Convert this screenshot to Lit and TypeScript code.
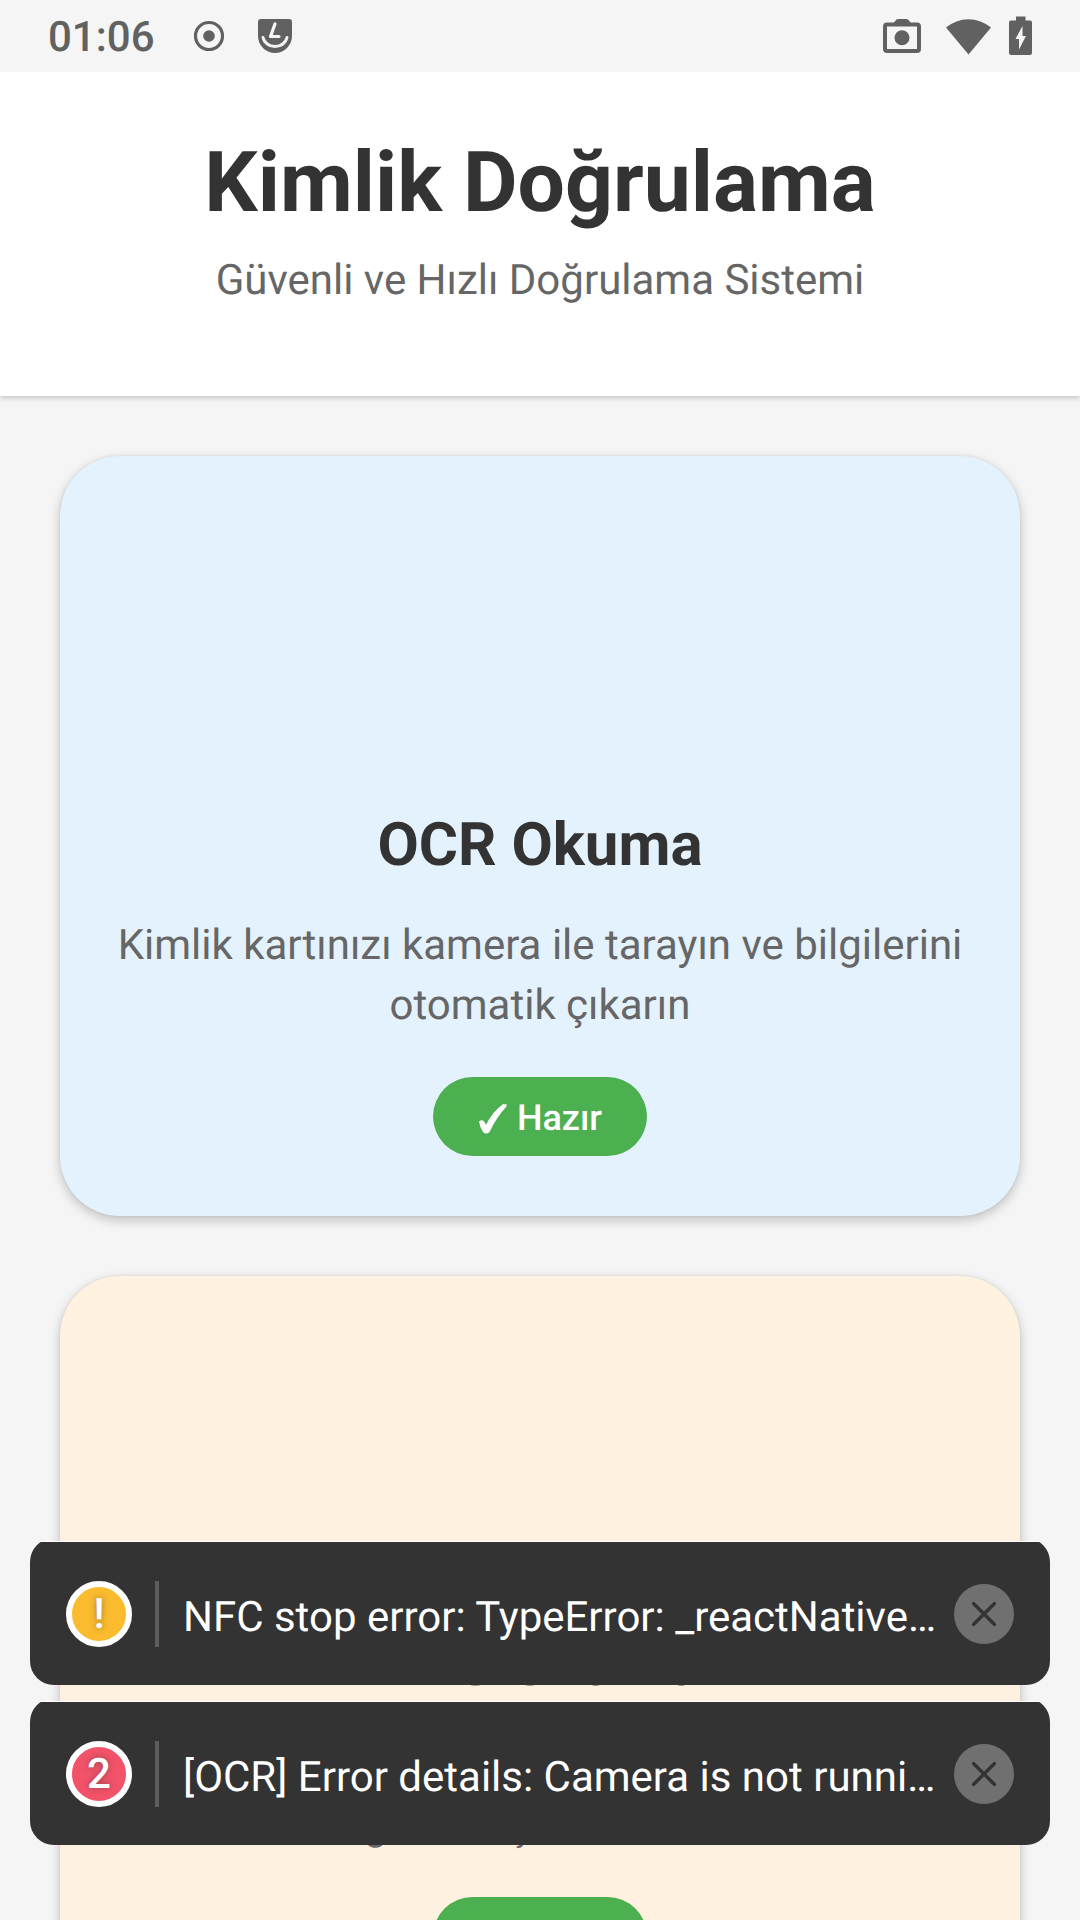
import { LitElement, html, css, svg } from "lit";
import { customElement, property } from "lit/decorators.js";

@customElement("status-bar")
class StatusBar extends LitElement {
  static styles = css`
    :host {
      display: flex;
      justify-content: space-between;
      align-items: center;
      flex: none;
      height: 72px;
      padding: 0 48px;
      background: #f5f5f5;
      color: #616161;
    }
    .left, .right { display: flex; align-items: center; }
    .left { gap: 38px; }
    .right { gap: 18px; }
    .notices { display: flex; align-items: center; gap: 33px; }
    .clock { padding-top: 4px; font-size: 42px; line-height: 48px; font-weight: 500; }
    .camera { margin-right: 7px; }
    svg { display: block; }
  `;
  render() {
    return html`
      <div class="left">
        <time class="clock">01:06</time>
        <div class="notices">
          <svg width="32" height="32" viewBox="0 0 32 32">
            <circle cx="16" cy="16" r="13.5" fill="none" stroke="currentColor" stroke-width="3.2" />
            <circle cx="16" cy="16" r="5.8" fill="currentColor" />
          </svg>
          <svg width="34" height="34" viewBox="0 0 34 34">
            <path d="M3 0h28q3 0 3 3v14a17 17 0 0 1-34 0V3q0-3 3-3z" fill="currentColor" />
            <path d="M17 5l-4.500 12.500h8.500" fill="none" stroke="#f5f5f5" stroke-width="3.200" stroke-linecap="round" stroke-linejoin="round" />
            <path d="M5 18.500a12.200 11 0 0 0 24 0" fill="none" stroke="#f5f5f5" stroke-width="3" stroke-linecap="round" />
          </svg>
        </div>
      </div>
      <div class="right">
        <svg class="camera" width="38" height="34" viewBox="0 0 38 34">
          <path d="M10.500 4l3-3.500q.8-.5 2-.5h7.500q1.200 0 2 .5L28 4v2H10.500z" fill="currentColor" />
          <rect x="2" y="5.500" width="34" height="26.500" rx="2" fill="none" stroke="currentColor" stroke-width="4" />
          <circle cx="19" cy="18.700" r="7.500" fill="currentColor" />
        </svg>
        <svg width="45" height="38" viewBox="0 0 45 38">
          <path d="M22.500 37.500L0 10.500a35 35 0 0 1 45 0z" fill="currentColor" />
        </svg>
        <svg width="23" height="40" viewBox="0 0 23 40">
          <path d="M7 .5h9.500v4H21q2 0 2 2v30.500q0 2-2 2H2q-2 0-2-2V6.500q0-2 2-2h5z" fill="currentColor" />
          <path d="M13.500 10L6.500 23h3.500v10.500l7-13.500h-3.500z" fill="#f5f5f5" />
        </svg>
      </div>
    `;
  }
}

@customElement("option-card")
class OptionCard extends LitElement {
  @property() heading = "";
  @property() text = "";
  @property() status = "";
  @property() tone = "blue";
  static styles = css`
    :host { display: block; }
    .card {
      display: flex;
      flex-direction: column;
      align-items: center;
      padding: 60px 54px;
      border-radius: 60px;
      text-align: center;
      box-shadow: 0 4px 12px rgba(0, 0, 0, 0.22), 0 0 3px rgba(0, 0, 0, 0.08);
    }
    .blue { background: #e3f2fd; }
    .orange { background: #fff1df; }
    .picture { height: 293px; }
    h2 { margin: 0 0 35px; font-size: 60px; line-height: 72px; font-weight: 700; color: #333; }
    p { margin: 0 0 41px; font-size: 42px; line-height: 60px; color: #666; }
    .badge {
      display: flex;
      align-items: center;
      gap: 9px;
      padding: 20px 45px 16px;
      border-radius: 45px;
      background: #4caf50;
      color: #fff;
      font-size: 36px;
      line-height: 43px;
      font-weight: 500;
    }
    .badge svg { display: block; }
  `;
  render() {
    return html`
      <article class="card ${this.tone}">
        <div class="picture"></div>
        <h2>${this.heading}</h2>
        <p>${this.text}</p>
        <div class="badge">
          <svg width="30" height="32" viewBox="0 0 30 32">
            <path d="M1 18.500q4.500-3.500 7 3.500Q14.500 8.500 24.500 1.500q1-1.500 2 0l2-.5v2.500Q19 13.500 11.500 29q-3.500 3-6.500 0Q2 25 1 18.500z" fill="currentColor" />
          </svg>
          <span>${this.status}</span>
        </div>
      </article>
    `;
  }
}

@customElement("log-toast")
class LogToast extends LitElement {
  @property() mark = "";
  @property() message = "";
  @property() level = "warn";
  static styles = css`
    :host { display: block; overflow: hidden; }
    .toast {
      display: flex;
      align-items: center;
      margin-top: -3px;
      padding: 43px 36px 38px;
      border-radius: 24px;
      background: linear-gradient(#fff 4px, #333 4px);
    }
    .mark {
      display: grid;
      place-items: center;
      flex: none;
      box-sizing: border-box;
      width: 66px;
      height: 66px;
      padding-top: 2px;
      border: 6px solid #fff;
      border-radius: 50%;
      color: #fff;
      font-size: 42px;
      line-height: 48px;
      font-weight: 500;
      text-shadow: 0 0 6px rgba(51, 51, 51, 0.5);
    }
    .warn { background: #fabb2e; }
    .error { background: #f35369; }
    .message {
      flex: 1;
      min-width: 0;
      margin: 0 12px 0 23px;
      padding: 13px 0 5px 24px;
      border-left: 4px solid #5c5c5c;
      overflow: hidden;
      white-space: nowrap;
      text-overflow: ellipsis;
      color: #fff;
      font-size: 42px;
      line-height: 48px;
    }
    button {
      display: grid;
      place-items: center;
      flex: none;
      width: 60px;
      height: 60px;
      padding: 0;
      border: 0;
      border-radius: 50%;
      background: #707070;
    }
    button svg { display: block; }
  `;
  render() {
    return html`
      <div class="toast" role="alert">
        <span class="mark ${this.level}">${this.mark}</span>
        <span class="message">${this.message}</span>
        <button type="button" aria-label="Kapat">
          <svg width="24" height="24" viewBox="0 0 24 24">
            ${svg`<path d="M1.500 1.500l21 21M22.500 1.500l-21 21" fill="none" stroke="#333" stroke-width="3.400" stroke-linecap="round" />`}
          </svg>
        </button>
      </div>
    `;
  }
}

@customElement("app-root")
class AppRoot extends LitElement {
  static styles = css`
    :host {
      display: flex;
      flex-direction: column;
      position: relative;
      height: 100vh;
      overflow: hidden;
      background: #f5f5f5;
      font-family: Roboto, "Noto Sans", sans-serif;
      text-rendering: geometricPrecision;
    }
    .scroll { flex: 1; min-height: 0; overflow-y: auto; scrollbar-width: none; }
    .scroll::-webkit-scrollbar { display: none; }
    header {
      padding: 61px 48px 90px;
      background: #fff;
      text-align: center;
      box-shadow: 0 2px 5px rgba(0, 0, 0, 0.2);
    }
    h1 { margin: 0 0 23px; font-size: 84px; line-height: 100px; font-weight: 700; color: #333; }
    header p { margin: 0; font-size: 42px; line-height: 50px; color: #666; }
    main { display: flex; flex-direction: column; gap: 60px; padding: 60px; }
    .toasts {
      position: absolute;
      left: 30px;
      right: 30px;
      bottom: 75px;
      display: flex;
      flex-direction: column;
      gap: 16px;
    }
  `;
  render() {
    return html`
      <status-bar></status-bar>
      <div class="scroll">
        <header>
          <h1>Kimlik Doğrulama</h1>
          <p>Güvenli ve Hızlı Doğrulama Sistemi</p>
        </header>
        <main>
          <option-card
            heading="OCR Okuma"
            text="Kimlik kartınızı kamera ile tarayın ve bilgilerini otomatik çıkarın"
            status="Hazır"
            tone="blue"
          ></option-card>
          <option-card
            heading="NFC Okuma"
            text="NFC teknolojisi ile kimlik kartı bilgilerinizi güvenli şekilde alın"
            status="Hazır"
            tone="orange"
          ></option-card>
        </main>
      </div>
      <div class="toasts">
        <log-toast
          mark="!"
          level="warn"
          message="NFC stop error: TypeError: _reactNative.NativeModules is undefined"
        ></log-toast>
        <log-toast
          mark="2"
          level="error"
          message="[OCR] Error details: Camera is not running or not ready"
        ></log-toast>
      </div>
    `;
  }
}
